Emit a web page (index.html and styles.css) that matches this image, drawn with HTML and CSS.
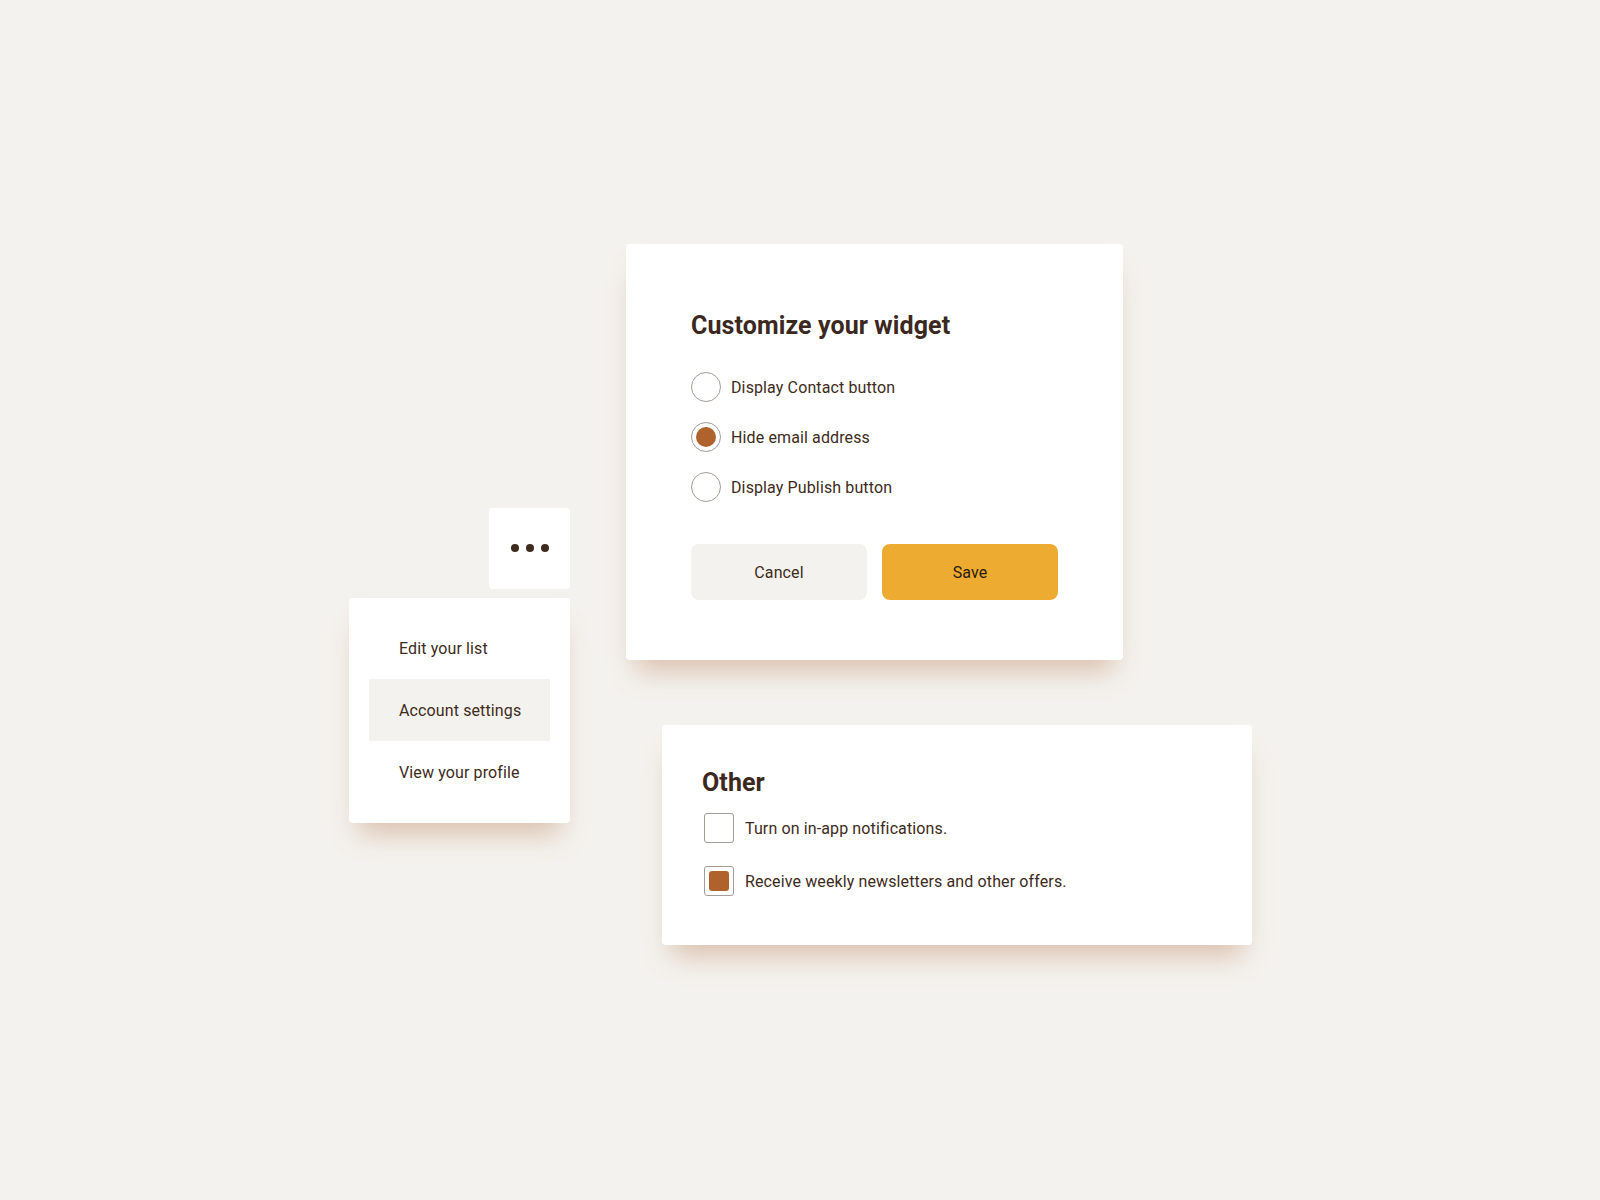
FILE: index.html
```html
<!DOCTYPE html>
<html lang="en">
<head>
<meta charset="utf-8">
<title>Widget settings</title>
<link rel="stylesheet" href="styles.css">
</head>
<body>
<div class="canvas">
  <div class="menu-group">
    <div class="more" aria-label="More options">
      <span class="dot"></span><span class="dot"></span><span class="dot"></span>
    </div>
    <ul class="menu">
      <li class="menu-item">Edit your list</li>
      <li class="menu-item active">Account settings</li>
      <li class="menu-item">View your profile</li>
    </ul>
  </div>
  <div class="cards">
    <section class="card widget">
      <h2 class="title">Customize your widget</h2>
      <div class="radios">
        <label class="option"><span class="radio"></span><span>Display Contact button</span></label>
        <label class="option"><span class="radio checked"><span class="radio-fill"></span></span><span>Hide email address</span></label>
        <label class="option"><span class="radio"></span><span>Display Publish button</span></label>
      </div>
      <div class="actions">
        <button class="btn btn-cancel">Cancel</button>
        <button class="btn btn-save">Save</button>
      </div>
    </section>
    <section class="card other">
      <h2 class="title title-other">Other</h2>
      <div class="checks">
        <label class="option"><span class="check"></span><span>Turn on in-app notifications.</span></label>
        <label class="option"><span class="check"><span class="check-fill"></span></span><span>Receive weekly newsletters and other offers.</span></label>
      </div>
    </section>
  </div>
</div>
</body>
</html>
```

FILE: styles.css
```css
* { box-sizing: border-box; }

body {
  margin: 0;
  background: #f4f2ee;
  color: #3e2b20;
  font-family: Roboto, "Liberation Sans", sans-serif;
  font-size: 16px;
  letter-spacing: 0.12px;
  min-height: 1200px;
}

.canvas {
  display: flex;
  align-items: flex-start;
  gap: 56px;
  padding: 244px 0 0 349px;
}

/* menu */
.menu-group {
  width: 221px;
  margin-top: 264px;
  display: flex;
  flex-direction: column;
  align-items: flex-end;
  gap: 9px;
}

.more {
  width: 81px;
  height: 81px;
  background: #fff;
  border-radius: 4px;
  display: flex;
  align-items: center;
  justify-content: center;
  gap: 7px;
  padding-bottom: 1px;
}

.dot {
  width: 8px;
  height: 8px;
  border-radius: 50%;
  background: #3e2b20;
}

.menu {
  align-self: stretch;
  list-style: none;
  margin: 0;
  padding: 19px 20px 20px;
  background: #fff;
  border-radius: 4px;
  box-shadow: 0 20px 26px -10px rgba(180, 118, 78, 0.42);
}

.menu-item {
  height: 62px;
  padding-left: 30px;
  display: flex;
  align-items: center;
}

.menu-item.active { background: #f4f2ee; }

/* cards */
.cards {
  display: flex;
  flex-direction: column;
  align-items: flex-start;
}

.card {
  background: #fff;
  border-radius: 4px;
  box-shadow: 0 20px 26px -10px rgba(180, 118, 78, 0.42);
}

.title {
  margin: 0;
  font-size: 25px;
  line-height: 32px;
  font-weight: 700;
  letter-spacing: 0.1px;
  color: #3b281e;
}

.title-other { margin-left: -2px; }

.widget {
  width: 497px;
  padding: 66px 65px 60px;
}

.radios {
  margin-top: 30px;
  display: flex;
  flex-direction: column;
  gap: 20px;
}

.option {
  display: flex;
  align-items: center;
  gap: 10px;
  height: 30px;
}

.radio {
  width: 30px;
  height: 30px;
  border: 1px solid #a39d98;
  border-radius: 50%;
  display: flex;
  align-items: center;
  justify-content: center;
  flex: none;
}

.radio-fill {
  width: 20px;
  height: 20px;
  border-radius: 50%;
  background: #b0622d;
}

.actions {
  margin-top: 42px;
  display: flex;
  gap: 15px;
}

.btn {
  width: 176px;
  height: 56px;
  border: 0;
  border-radius: 8px;
  font: inherit;
  font-size: 16px;
  letter-spacing: 0.12px;
  cursor: pointer;
}

.btn-cancel { background: #f4f2ee; color: #3e2b20; }
.btn-save { background: #eeab31; color: #2a1a0f; }

.other {
  width: 590px;
  margin: 65px 0 0 36px;
  padding: 42px 42px 49px;
}

.checks {
  margin-top: 14px;
  display: flex;
  flex-direction: column;
  gap: 23px;
}

.checks .option { gap: 11px; }

.check {
  width: 30px;
  height: 30px;
  border: 1px solid #a39d98;
  border-radius: 3px;
  display: flex;
  align-items: center;
  justify-content: center;
  flex: none;
}

.check-fill {
  width: 20px;
  height: 20px;
  border-radius: 3px;
  background: #b0622d;
}
```
